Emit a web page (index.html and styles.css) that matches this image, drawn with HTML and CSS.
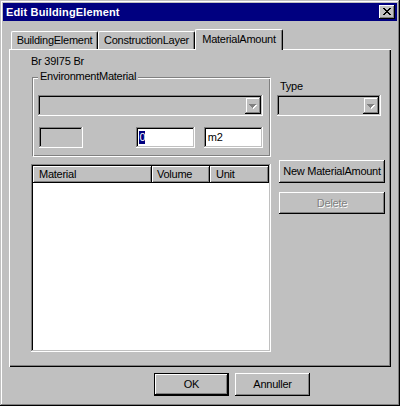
FILE: index.html
```html
<!DOCTYPE html>
<html>
<head>
<meta charset="utf-8">
<link rel="stylesheet" href="styles.css">
</head>
<body>
<div class="window">
  <div class="titlebar">
    <span class="title">Edit BuildingElement</span>
    <div class="close">
      <svg width="16" height="14" shape-rendering="crispEdges">
        <g fill="#000">
          <rect x="4" y="3" width="2" height="1"/><rect x="10" y="3" width="2" height="1"/>
          <rect x="5" y="4" width="2" height="1"/><rect x="9" y="4" width="2" height="1"/>
          <rect x="6" y="5" width="4" height="1"/>
          <rect x="7" y="6" width="2" height="1"/>
          <rect x="6" y="7" width="4" height="1"/>
          <rect x="5" y="8" width="2" height="1"/><rect x="9" y="8" width="2" height="1"/>
          <rect x="4" y="9" width="2" height="1"/><rect x="10" y="9" width="2" height="1"/>
        </g>
      </svg>
    </div>
  </div>
  <div class="content">
    <div class="tabs">
      <div class="tab t1">BuildingElement</div>
      <div class="tab t2">ConstructionLayer</div>
      <div class="tab t3 selected">MaterialAmount</div>
    </div>
    <div class="panel">
      <div class="code">Br 39I75 Br</div>
      <div class="row-a">
        <div class="group">
          <div class="legend">EnvironmentMaterial</div>
          <div class="combo wide">
            <div class="dd">
              <svg width="16" height="17" shape-rendering="crispEdges">
                <g fill="#fff">
                  <rect x="5" y="8" width="7" height="1"/><rect x="6" y="9" width="5" height="1"/><rect x="7" y="10" width="3" height="1"/><rect x="8" y="11" width="1" height="1"/>
                </g>
                <g fill="#808080">
                  <rect x="4" y="7" width="7" height="1"/><rect x="5" y="8" width="5" height="1"/><rect x="6" y="9" width="3" height="1"/><rect x="7" y="10" width="1" height="1"/>
                </g>
              </svg>
            </div>
          </div>
          <div class="edits">
            <div class="edit e1 disabled"></div>
            <div class="edit e2"><span class="sel">0</span></div>
            <div class="edit e3">m2</div>
          </div>
        </div>
        <div class="type-col">
          <div class="lbl">Type</div>
          <div class="combo narrow">
            <div class="dd">
              <svg width="16" height="17" shape-rendering="crispEdges">
                <g fill="#fff">
                  <rect x="5" y="8" width="7" height="1"/><rect x="6" y="9" width="5" height="1"/><rect x="7" y="10" width="3" height="1"/><rect x="8" y="11" width="1" height="1"/>
                </g>
                <g fill="#808080">
                  <rect x="4" y="7" width="7" height="1"/><rect x="5" y="8" width="5" height="1"/><rect x="6" y="9" width="3" height="1"/><rect x="7" y="10" width="1" height="1"/>
                </g>
              </svg>
            </div>
          </div>
        </div>
      </div>
      <div class="row-b">
        <div class="list">
          <div class="header">
            <div class="hcell c1">Material</div>
            <div class="hcell c2">Volume</div>
            <div class="hcell c3">Unit</div>
          </div>
        </div>
        <div class="btn-col">
          <div class="btn new">New MaterialAmount</div>
          <div class="btn del disabled">Delete</div>
        </div>
      </div>
    </div>
  </div>
  <div class="footer">
    <div class="btn default">OK</div>
    <div class="btn">Annuller</div>
  </div>
</div>
</body>
</html>
```
FILE: styles.css
```css
* { box-sizing: border-box; }

body {
  margin: 0;
  background: #c0c0c0;
  font-family: "Liberation Sans", Arial, sans-serif;
  font-size: 11px;
  line-height: 13px;
  letter-spacing: -0.25px;
  color: #000;
}

.window {
  width: 400px;
  height: 406px;
  padding: 3px;
  background: #c0c0c0;
  box-shadow: inset -1px -1px #000, inset 1px 1px #c0c0c0, inset -2px -2px #808080, inset 2px 2px #fff;
}

.titlebar {
  height: 18px;
  background: #000080;
  display: flex;
  align-items: center;
  justify-content: space-between;
  padding: 0 2px 0 3px;
}

.title {
  color: #fff;
  font-weight: bold;
  letter-spacing: 0.15px;
}

.close {
  width: 16px;
  height: 14px;
  background: #c0c0c0;
  box-shadow: inset -1px -1px #000, inset 1px 1px #fff, inset -2px -2px #808080, inset 2px 2px #c0c0c0;
}

.close svg, .dd svg { display: block; }

.content {
  padding: 8px 6px 0;
}

.tabs {
  display: flex;
  align-items: flex-end;
  height: 21px;
  margin-bottom: -1px;
  padding-left: 2px;
  position: relative;
  z-index: 1;
}

.tab {
  height: 18px;
  margin-bottom: 1px;
  background: #c0c0c0;
  border-top: 1px solid #fff;
  border-left: 1px solid #fff;
  border-right: 1px solid #000;
  box-shadow: inset -1px 0 #808080;
  border-radius: 2px 2px 0 0;
  text-align: center;
  line-height: 17px;
  white-space: nowrap;
}

.tab.selected {
  height: 21px;
  margin-bottom: 0;
  line-height: 18px;
}

.t1 { width: 87px; }
.t2 { width: 97px; }
.t3 { width: 88px; }

.panel {
  height: 318px;
  padding: 6px 0 0 22px;
  box-shadow: inset 1px 1px #fff, inset -1px -1px #000, inset -2px -2px #808080;
}

.code { height: 13px; }

.row-a {
  display: flex;
  align-items: flex-start;
  margin-top: 2px;
}

.group {
  margin: 7px 0 0 1px;
  width: 239px;
  padding: 0 7px 8px 5px;
  border: 1px solid #808080;
  border-right-color: #fff;
  border-bottom-color: #fff;
  box-shadow: inset 1px 1px #fff, inset -1px -1px #808080;
}

.legend {
  width: max-content;
  margin-top: -8px;
  padding: 0 2px;
  background: #c0c0c0;
  line-height: 13px;
}

.combo {
  height: 21px;
  margin-top: 12px;
  padding: 2px;
  display: flex;
  justify-content: flex-end;
  background: #c0c0c0;
  box-shadow: inset -1px -1px #fff, inset 1px 1px #808080, inset -2px -2px #c0c0c0, inset 2px 2px #000;
}

.combo.wide { width: 225px; }
.combo.narrow { width: 104px; margin-top: 2px; }

.dd {
  width: 16px;
  height: 17px;
  background: #c0c0c0;
  box-shadow: inset -1px -1px #000, inset 1px 1px #c0c0c0, inset -2px -2px #808080, inset 2px 2px #fff;
}

.edits {
  display: flex;
  margin-top: 11px;
}

.edit {
  height: 21px;
  background: #fff;
  padding: 4px 4px 0;
  box-shadow: inset -1px -1px #fff, inset 1px 1px #808080, inset -2px -2px #c0c0c0, inset 2px 2px #000;
}

.edit.disabled { background: #c0c0c0; }

.e1 { width: 45px; margin-left: 1px; }
.e2 { width: 59px; margin-left: 53px; padding-left: 3px; }
.e3 { width: 60px; margin-left: 9px; }

.sel {
  display: inline-block;
  background: #000080;
  color: #fff;
  line-height: 13px;
}

.type-col {
  margin-left: 6px;
  width: 104px;
}

.lbl {
  margin-top: 10px;
  padding-left: 3px;
}

.row-b {
  display: flex;
  align-items: flex-start;
  margin-top: 3px;
}

.list {
  width: 240px;
  height: 188px;
  margin-top: 4px;
  padding: 2px;
  background: #fff;
  box-shadow: inset -1px -1px #fff, inset 1px 1px #808080, inset -2px -2px #c0c0c0, inset 2px 2px #000;
}

.header {
  display: flex;
  height: 17px;
}

.hcell {
  background: #c0c0c0;
  padding: 2px 0 0 6px;
  box-shadow: inset -1px -1px #000, inset 1px 1px #fff, inset -2px -2px #808080;
}

.c1 { width: 119px; }
.c2 { width: 58px; padding-left: 5px; }
.c3 { flex: 1; }

.btn-col {
  margin-left: 8px;
  width: 106px;
}

.btn {
  display: flex;
  align-items: center;
  justify-content: center;
  height: 23px;
  background: #c0c0c0;
  white-space: nowrap;
  box-shadow: inset -1px -1px #000, inset 1px 1px #fff, inset -2px -2px #808080, inset 2px 2px #c0c0c0;
}

.btn.del {
  height: 22px;
  margin-top: 9px;
}

.btn.disabled {
  color: #808080;
  text-shadow: 1px 1px #fff;
}

.footer {
  display: flex;
  gap: 6px;
  margin-top: 6px;
  padding-left: 151px;
}

.footer .btn { width: 75px; }

.btn.default {
  box-shadow: inset 0 0 0 1px #000, inset -2px -2px #000, inset 2px 2px #fff, inset -3px -3px #808080, inset 3px 3px #c0c0c0;
}
```
